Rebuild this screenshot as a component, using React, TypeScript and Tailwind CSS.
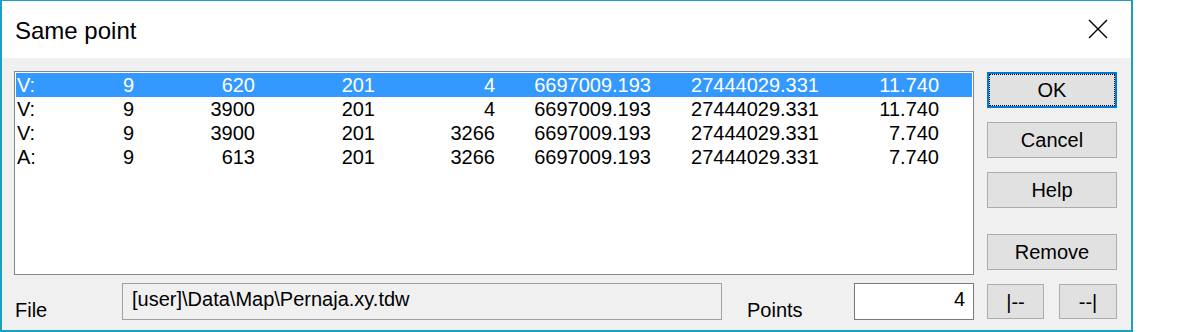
import React from "react";

type Row = {
  kind: string;
  cols: string[];
};

const rows: Row[] = [
  { kind: "V:", cols: ["9", "620", "201", "4", "6697009.193", "27444029.331", "11.740"] },
  { kind: "V:", cols: ["9", "3900", "201", "4", "6697009.193", "27444029.331", "11.740"] },
  { kind: "V:", cols: ["9", "3900", "201", "3266", "6697009.193", "27444029.331", "7.740"] },
  { kind: "A:", cols: ["9", "613", "201", "3266", "6697009.193", "27444029.331", "7.740"] },
];

const DlgButton: React.FC<{ label: string; isDefault?: boolean; className?: string }> = ({
  label,
  isDefault,
  className = "",
}) => {
  if (isDefault) {
    return (
      <button
        className={`relative flex items-center justify-center bg-[#e1e1e1] border-2 border-[#0078d7] text-black ${className}`}
      >
        <span className="absolute inset-0 border border-dotted border-black" />
        {label}
      </button>
    );
  }
  return (
    <button
      className={`flex items-center justify-center bg-[#e1e1e1] border border-[#adadad] text-black ${className}`}
    >
      {label}
    </button>
  );
};

export default function App() {
  return (
    <div
      className="w-[1200px] h-[332px] bg-white text-[20px] leading-[24px] text-black"
      style={{ fontFamily: '"Liberation Sans", Arial, sans-serif' }}
    >
      <div className="w-[1133px] h-[332px] flex flex-col border-t border-l-2 border-r-2 border-b-2 border-[#1ba0c2]">
        {/* Title bar */}
        <div className="h-[57px] bg-white flex items-center justify-between pl-[13px] pr-[23px]">
          <span className="text-[24px] leading-[28px] pt-[2px]">Same point</span>
          <svg width="20" height="20" viewBox="0 0 20 20" className="mb-[1px]">
            <path d="M1 1 L19 19 M19 1 L1 19" stroke="#000" strokeWidth="1.4" fill="none" />
          </svg>
        </div>

        {/* Body */}
        <div className="flex-1 bg-[#f0f0f0] pl-[12px] pt-[13px]">
          <div className="flex">
            {/* List */}
            <div className="w-[960px] h-[204px] bg-white border border-[#828790] p-[1px]">
              {rows.map((r, i) => (
                <div
                  key={i}
                  className={`flex h-[24px] ${i === 0 ? "bg-[#3399ff] text-white" : "text-black"}`}
                >
                  <div className="w-[58px] pl-[1px]">{r.kind}</div>
                  <div className="w-[60px] text-right">{r.cols[0]}</div>
                  <div className="w-[121px] text-right">{r.cols[1]}</div>
                  <div className="w-[120px] text-right">{r.cols[2]}</div>
                  <div className="w-[120px] text-right">{r.cols[3]}</div>
                  <div className="w-[156px] text-right">{r.cols[4]}</div>
                  <div className="w-[168px] text-right">{r.cols[5]}</div>
                  <div className="w-[120px] text-right">{r.cols[6]}</div>
                </div>
              ))}
            </div>

            {/* Buttons */}
            <div className="ml-[13px] pt-[1px] flex flex-col">
              <DlgButton label="OK" isDefault className="w-[130px] h-[36px]" />
              <DlgButton label="Cancel" className="w-[130px] h-[36px] mt-[14px]" />
              <DlgButton label="Help" className="w-[130px] h-[36px] mt-[14px]" />
              <DlgButton label="Remove" className="w-[130px] h-[36px] mt-[26px]" />
            </div>
          </div>

          {/* Bottom row */}
          <div className="flex items-start mt-[8px]">
            <div className="w-[108px] pl-[1px] pt-[15px]">File</div>
            <div className="w-[600px] h-[37px] border border-[#a0a0a0] bg-[#f0f0f0] pl-[9px] pt-[3px]">
              {"[user]\\Data\\Map\\Pernaja.xy.tdw"}
            </div>
            <div className="w-[132px] pl-[25px] pt-[15px]">Points</div>
            <div className="w-[120px] h-[37px] border border-[#7a7a7a] bg-white text-right pr-[8px] pt-[3px]">
              4
            </div>
            <DlgButton label="|--" className="w-[57px] h-[35px] ml-[13px] mt-[1px]" />
            <DlgButton label="--|" className="w-[58px] h-[35px] ml-[15px] mt-[1px]" />
          </div>
        </div>
      </div>
    </div>
  );
}
